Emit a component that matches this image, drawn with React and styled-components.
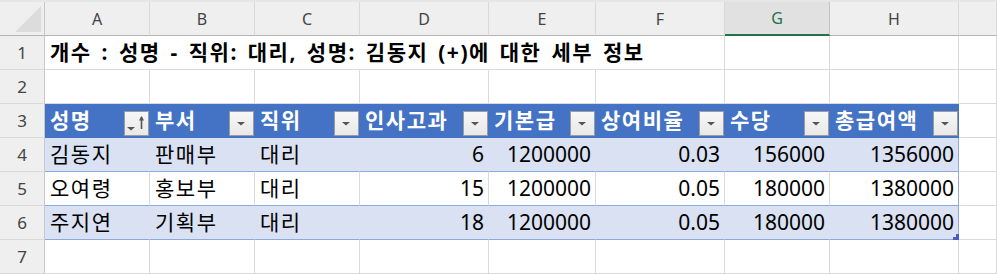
import styled, { createGlobalStyle } from "styled-components";

const GlobalStyle = createGlobalStyle`
  html, body {
    margin: 0;
    padding: 0;
    background: #fff;
  }
  body {
    font-family: "Noto Sans", "Noto Sans CJK KR", sans-serif;
    overflow: hidden;
  }
`;

const Sheet = styled.div`
  display: grid;
  grid-template-columns: 45px 105px 105px 105px 129px 107px 129px 105px 129px 1fr;
  grid-template-rows: 34px;
  grid-auto-rows: 34px;
  width: 997px;
  padding-top: 2px;
  background: #e6e6e6;
`;

const Corner = styled.div`
  box-sizing: border-box;
  background: #efefef;
  border-right: 1px solid #c8c8c8;
  border-bottom: 1px solid #b4b4b4;
  display: flex;
  align-items: flex-start;
  justify-content: flex-start;
`;

const ColHead = styled.div`
  box-sizing: border-box;
  display: flex;
  align-items: center;
  justify-content: center;
  background: ${(p) => (p.$selected ? "#e1e1e1" : "#efefef")};
  color: ${(p) => (p.$selected ? "#217346" : "#444")};
  border-right: 1px solid ${(p) => (p.$selected ? "#c4c4c4" : "#d9d9d9")};
  border-bottom: ${(p) => (p.$selected ? "2px solid #217346" : "1px solid #b4b4b4")};
  font-family: "Noto Sans", "Open Sans", sans-serif;
  font-size: 16px;
`;

const RowHead = styled.div`
  box-sizing: border-box;
  display: flex;
  align-items: center;
  justify-content: center;
  background: #efefef;
  color: #444;
  border-right: 1px solid #c8c8c8;
  border-bottom: 1px solid #d9d9d9;
  font-family: "Noto Sans", "Open Sans", sans-serif;
  font-size: 17px;
`;

const Cell = styled.div`
  box-sizing: border-box;
  position: relative;
  display: flex;
  align-items: center;
  justify-content: ${(p) => (p.$num ? "flex-end" : "flex-start")};
  grid-column: span ${(p) => p.$span || 1};
  padding: 0 4px 0 5px;
  background: #fff;
  border-right: 1px solid #dadada;
  border-bottom: 1px solid #dadada;
  color: #000;
  font-size: 21px;
  font-weight: ${(p) => (p.$bold ? 700 : 400)};
  letter-spacing: ${(p) => (p.$num ? "0" : "1.5px")};
  word-spacing: ${(p) => (p.$bold ? "3px" : "0")};
  line-height: 1;
  white-space: nowrap;
`;

const HeadCell = styled(Cell)`
  background: #4472c4;
  color: #fff;
  font-weight: 700;
  border-right-color: #4472c4;
  border-bottom-color: #4472c4;
`;

const DataCell = styled(Cell)`
  background: ${(p) => (p.$band ? "#d9e1f2" : "#fff")};
  border-bottom-color: #8ea9db;
  border-right-color: ${(p) => (p.$edge ? "#8ea9db" : p.$band ? "#d9e1f2" : "#dadada")};
`;

const FilterButton = styled.span`
  box-sizing: border-box;
  display: flex;
  align-self: flex-end;
  width: 25px;
  height: 25px;
  margin: 0 -4px 1px auto;
  background: linear-gradient(#f7f7f7, #e8e8e8);
  border: 1px solid #9c9c9c;
  flex-shrink: 0;
`;

const ResizeHandle = styled.span`
  position: absolute;
  right: -1px;
  bottom: -1px;
  width: 6px;
  height: 6px;
  background: #4a5cc0;
  clip-path: polygon(50% 0, 100% 0, 100% 100%, 0 100%, 0 50%, 50% 50%);
`;

const columns = ["A", "B", "C", "D", "E", "F", "G", "H", ""];

const headers = ["성명", "부서", "직위", "인사고과", "기본급", "상여비율", "수당", "총급여액"];

const rows = [
  ["김동지", "판매부", "대리", 6, 1200000, 0.03, 156000, 1356000],
  ["오여령", "홍보부", "대리", 15, 1200000, 0.05, 180000, 1380000],
  ["주지연", "기획부", "대리", 18, 1200000, 0.05, 180000, 1380000],
];

function DropIcon({ sorted }) {
  return (
    <svg width="23" height="23" viewBox="0 0 23 23">
      {sorted ? (
        <>
          <polygon points="2,15 10,15 6,18.5" fill="#555" />
          <line x1="16.5" y1="5" x2="16.5" y2="17" stroke="#555" strokeWidth="1.6" />
          <polygon points="14,8.5 16.5,4 19,8.5" fill="#555" />
        </>
      ) : (
        <polygon points="7,10 15,10 11,13.5" fill="#555" />
      )}
    </svg>
  );
}

export default function App() {
  return (
    <>
      <GlobalStyle />
      <Sheet>
        <Corner>
          <svg width="44" height="33" viewBox="0 0 44 33">
            <polygon points="41,4 41,30 15,30" fill="#dcdcdc" />
          </svg>
        </Corner>
        {columns.map((c, i) => (
          <ColHead key={i} $selected={c === "G"}>
            {c}
          </ColHead>
        ))}

        <RowHead>1</RowHead>
        <Cell $span={6} $bold>
          개수 : 성명 - 직위: 대리, 성명: 김동지 (+)에 대한 세부 정보
        </Cell>
        <Cell />
        <Cell />
        <Cell />

        <RowHead>2</RowHead>
        {columns.map((c, i) => (
          <Cell key={i} />
        ))}

        <RowHead>3</RowHead>
        {headers.map((h, i) => (
          <HeadCell key={h}>
            {h}
            <FilterButton>
              <DropIcon sorted={i === 0} />
            </FilterButton>
          </HeadCell>
        ))}
        <Cell />

        {rows.map((r, ri) => (
          <>
            <RowHead key={"h" + ri}>{ri + 4}</RowHead>
            {r.map((v, ci) => (
              <DataCell
                key={ri + "-" + ci}
                $band={ri % 2 === 0}
                $edge={ci === r.length - 1}
                $num={typeof v === "number"}
              >
                {v}
                {ri === rows.length - 1 && ci === r.length - 1 && <ResizeHandle />}
              </DataCell>
            ))}
            <Cell key={"x" + ri} />
          </>
        ))}

        <RowHead>7</RowHead>
        {columns.map((c, i) => (
          <Cell key={i} />
        ))}
      </Sheet>
    </>
  );
}
